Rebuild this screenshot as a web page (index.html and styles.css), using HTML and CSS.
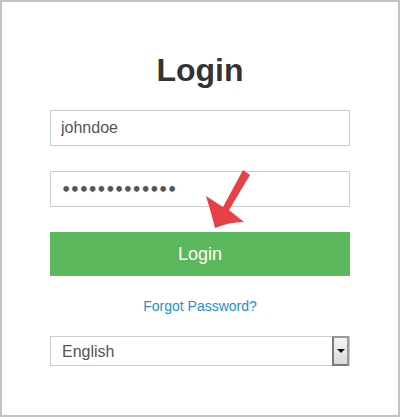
FILE: index.html
```html
<!DOCTYPE html>
<html lang="en">
<head>
    <meta charset="UTF-8">
    <meta name="viewport" content="width=device-width, initial-scale=1.0">
    <title>Login</title>
    <link rel="stylesheet" href="styles.css">
</head>
<body>
    <div class="frame">
        <div class="login-box">
            <h1>Login</h1>
            <form id="loginForm">
                <input type="text" class="field" value="johndoe">
                <input type="password" class="field password" value="johndoe123456">
                <button type="submit" class="login-button">Login</button>
            </form>
            <a href="#" class="forgot">Forgot Password?</a>
            <div class="select-wrap">
                <select class="lang">
                    <option>English</option>
                </select>
                <span class="select-btn"></span>
            </div>
            <!-- red pointer arrow drawn over the form -->
            <svg class="pointer" width="60" height="70" viewBox="200 165 60 70">
                <path d="M243 170 L250 175 L229 210 L244 222 Q229 222 215 228 Q211 212 206 196 L223 207 Z" fill="#e84145"/>
            </svg>
        </div>
    </div>
</body>
</html>
```

FILE: styles.css
```css
body {
    margin: 0;
    padding: 0;
    font-family: "Liberation Sans", Arial, sans-serif;
    background: #fff;
}

.frame {
    width: 400px;
    height: 417px;
    box-sizing: border-box;
    border: 2px solid #c3c3c3;
    padding-top: 50px;
}

.login-box {
    position: relative;
    width: 300px;
    margin: 0 auto;
}

h1 {
    margin: 0 0 21px;
    font-size: 32px;
    line-height: 37px;
    text-align: center;
    color: #333;
}

form {
    display: flex;
    flex-direction: column;
    gap: 25px;
}

.field {
    height: 36px;
    box-sizing: border-box;
    margin: 0;
    padding: 0 10px;
    border: 1px solid #ccc;
    font-family: inherit;
    font-size: 16px;
    color: #555;
    outline: none;
}

.password {
    font-family: "DejaVu Sans", sans-serif;
    font-size: 16px;
    font-weight: bold;
    letter-spacing: -1.4px;
    color: #555;
}

.login-button {
    height: 44px;
    margin: 0;
    border: none;
    background-color: #5cb85c;
    color: #fff;
    font-family: inherit;
    font-size: 18px;
    cursor: pointer;
}

.forgot {
    display: block;
    margin-top: 22px;
    font-size: 14px;
    line-height: 16px;
    text-align: center;
    color: #1b8fd2;
    text-decoration: none;
}

.select-wrap {
    position: relative;
    margin-top: 22px;
}

.lang {
    display: block;
    width: 300px;
    height: 30px;
    margin: 0;
    padding: 0 11px;
    border: 1px solid #ccc;
    background: #fff;
    font-family: inherit;
    font-size: 16px;
    color: #555;
    appearance: none;
    -webkit-appearance: none;
    border-radius: 0;
}

.select-btn {
    position: absolute;
    top: 0;
    right: 1px;
    width: 13px;
    height: 26px;
    border: 2px solid #7a7a7a;
    border-top-color: #9a9a9a;
    border-right-color: #9a9a9a;
    background: linear-gradient(#f6f6f6, #dadada);
    pointer-events: none;
}

.select-btn::after {
    content: "";
    position: absolute;
    left: 3px;
    top: 11px;
    border-left: 4px solid transparent;
    border-right: 4px solid transparent;
    border-top: 4px solid #111;
}

.pointer {
    position: absolute;
    left: 150px;
    top: 113px;
}
```
